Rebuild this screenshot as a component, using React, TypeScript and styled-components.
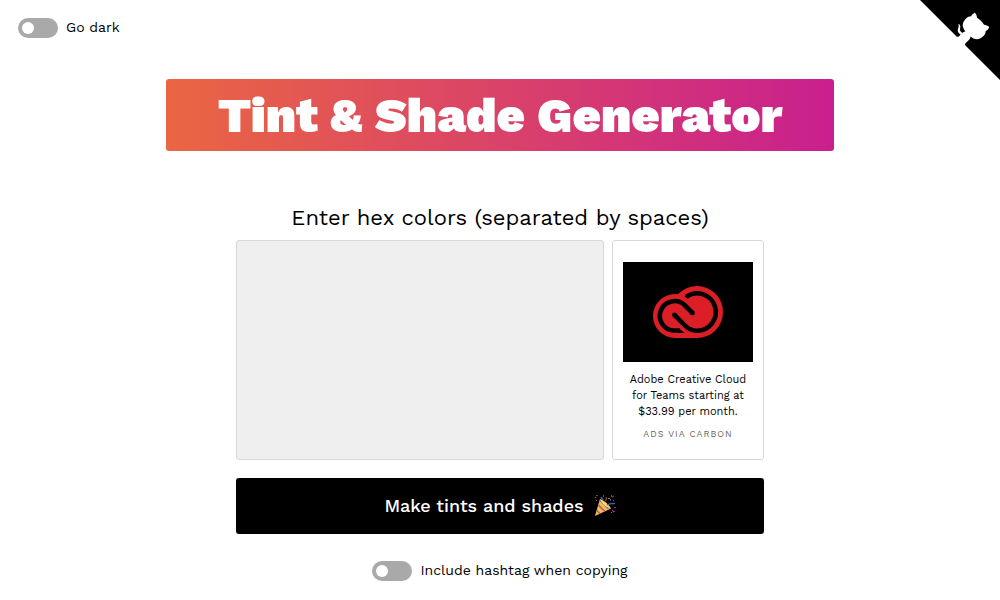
import React from "react";
import styled, { createGlobalStyle } from "styled-components";

const GlobalStyle = createGlobalStyle`
  *, *::before, *::after { box-sizing: border-box; }
  body {
    margin: 0;
    background: #fff;
    color: #000;
    font-family: "Work Sans", Inter, "Liberation Sans", sans-serif;
    font-size: 14px;
  }
`;

const Page = styled.div`
  position: relative;
  padding: 18px 18px 16px;
`;

const Main = styled.main`
  display: flex;
  flex-direction: column;
  align-items: center;
  padding-top: 41px;
`;

const Banner = styled.h1`
  width: 668px;
  max-width: 100%;
  margin: 0 0 53px;
  padding: 6px 12px;
  border-radius: 3px;
  background: linear-gradient(to right, #ea6642, #c91f8f);
  color: #fff;
  font-size: 49px;
  font-weight: 900;
  line-height: 60px;
  text-align: center;
`;

const Form = styled.form`
  display: flex;
  flex-direction: column;
  align-items: center;
  width: 528px;
  max-width: 100%;
`;

const FieldLabel = styled.label`
  margin-bottom: 8px;
  font-size: 22px;
  line-height: 28px;
  text-align: center;
`;

const InputRow = styled.div`
  display: flex;
  gap: 8px;
  width: 100%;
  margin-bottom: 18px;
`;

const ColorInput = styled.textarea`
  flex: 1;
  min-width: 0;
  height: 220px;
  padding: 12px;
  border: 1px solid #d8d8d8;
  border-radius: 3px;
  background: #efefef;
  font: inherit;
  font-size: 20px;
  resize: none;
`;

const AdCard = styled.aside`
  display: flex;
  flex-direction: column;
  width: 152px;
  padding: 21px 10px 0;
  border: 1px solid #d8d8d8;
  border-radius: 3px;
  text-align: center;
`;

const AdLink = styled.a`
  color: #000;
  font-size: 11px;
  line-height: 16px;
  text-decoration: none;
`;

const AdArt = styled.svg`
  display: block;
  width: 130px;
  height: 100px;
  margin-bottom: 10px;
  background: #000;
`;

const AdCredit = styled.a`
  margin-top: 7px;
  color: #666;
  font-size: 9px;
  line-height: 14px;
  letter-spacing: 1px;
  text-decoration: none;
  text-transform: uppercase;
`;

const SubmitButton = styled.button`
  display: flex;
  align-items: center;
  justify-content: center;
  gap: 10px;
  width: 100%;
  height: 56px;
  margin-bottom: 27px;
  padding: 0 0 2px;
  border: 0;
  border-radius: 3px;
  background: #000;
  color: #fff;
  font: inherit;
  font-size: 18px;
  font-weight: 500;
  cursor: pointer;
`;

const ToggleLabel = styled.label`
  display: inline-flex;
  align-items: center;
  gap: 8px;
  line-height: 18px;
  cursor: pointer;
`;

const ToggleText = styled.span`
  padding-bottom: 2px;
`;

const Switch = styled.input`
  appearance: none;
  display: flex;
  align-items: center;
  width: 40px;
  height: 20px;
  margin: 0;
  padding: 0 4px;
  border-radius: 10px;
  background: #a9a9a9;
  cursor: pointer;

  &::before {
    content: "";
    width: 12px;
    height: 12px;
    border-radius: 50%;
    background: #fff;
  }

  &:checked {
    justify-content: flex-end;
    background: #000;
  }
`;

const CornerLink = styled.a`
  position: absolute;
  top: 0;
  right: 0;
  color: #fff;

  svg { display: block; }
`;

function Toggle({ children }: { children: React.ReactNode }) {
  return (
    <ToggleLabel>
      <Switch type="checkbox" role="switch" />
      <ToggleText>{children}</ToggleText>
    </ToggleLabel>
  );
}

function GithubCorner() {
  return (
    <CornerLink href="https://github.com" aria-label="View source on GitHub">
      <svg width="80" height="80" viewBox="0 0 250 250" aria-hidden="true">
        <path fill="#000" d="M0,0 L115,115 L130,115 L142,142 L250,250 L250,0 Z" />
        <path fill="currentColor" d="M128.3,109.0 C113.8,99.7 119.0,89.6 119.0,89.6 C122.0,82.7 120.5,78.6 120.5,78.6 C119.2,72.0 123.4,76.3 123.4,76.3 C127.3,80.9 125.5,87.3 125.5,87.3 C122.9,97.6 130.6,101.9 134.4,103.2" />
        <path fill="currentColor" d="M115.0,115.0 C114.9,115.1 118.7,116.5 119.8,115.4 L133.7,101.6 C136.9,99.2 139.9,98.4 142.2,98.6 C133.8,88.0 127.5,74.4 143.8,58.0 C148.5,53.4 154.0,51.2 159.7,51.0 C160.3,49.4 163.2,43.6 171.4,40.1 C171.4,40.1 176.1,42.5 178.8,56.2 C183.1,58.6 187.2,61.8 190.9,65.4 C194.5,69.0 197.7,73.2 200.1,77.6 C213.8,80.2 216.3,84.9 216.3,84.9 C212.7,93.1 206.9,96.0 205.4,96.6 C205.1,102.4 203.0,107.8 198.3,112.5 C181.9,128.9 168.3,122.5 157.7,114.1 C157.9,116.9 156.7,120.9 152.7,124.9 L141.0,136.5 C139.8,137.7 141.6,141.9 141.8,141.8 Z" />
      </svg>
    </CornerLink>
  );
}

function CreativeCloudArt() {
  return (
    <AdArt viewBox="0 0 130 100" role="img" aria-label="Adobe Creative Cloud">
      <g fill="#dc1f26">
        <circle cx="74" cy="50" r="26" />
        <circle cx="52" cy="54" r="22" />
        <path d="M52 60H74V76H52Z" />
      </g>
      <g fill="none" stroke="#000" strokeWidth="4.6">
        <path d="M63.5 34.6A18.7 18.7 0 1 1 74 68.7Q67 68.7 62 63.5L51.5 53" />
        <path d="M69.5 51L62 43.5A14.7 14.7 0 1 0 52 68.5H57" />
      </g>
      <circle cx="51.5" cy="53" r="2.4" />
      <circle cx="69.5" cy="51" r="2.4" />
      <path d="M61.5 34.3L66 31V36L64.5 36.8Z" />
      <path d="M56 66.2L61.5 71H55Z" />
    </AdArt>
  );
}

function PartyPopper() {
  return (
    <svg width="22" height="22" viewBox="0 0 22 22" aria-hidden="true">
      <path fill="#f3bf4a" d="M1 22L6 5Q12 8 17 14.5Z" />
      <path fill="#a8628c" d="M4.6 10L11.6 17L10 17.8L4.1 12ZM6 5L7.6 6.4L15.6 15.2L14.2 15.8L5.5 7ZM3 15.4L6.9 19.3L5.4 20L2.5 17.2Z" />
      <path fill="#ffd968" d="M6 5Q13 8 17 14.5Q13 13.5 10 11Q7 8 6 5Z" />
      <path fill="none" stroke="#2f6a9f" strokeWidth="1.5" d="M13 11Q16 9 21 9.5M7 3L9 6" />
      <path fill="none" stroke="#9c3d36" strokeWidth="1.2" d="M11 7Q13 6 12 3M18 3L20 2M18 16L20 18M1 3L2 4" />
      <path fill="#40579b" d="M2 1H4V2H2ZM16 5H17V7H16ZM20 13H22V14H20Z" />
      <path fill="#a67c2c" d="M14 4H16V5H14ZM19 6H20V7H19ZM17 18H18V19H17ZM2 6H3V7H2Z" />
      <path fill="#8d3d50" d="M9 1H10V3H9ZM20 17H21V18H20ZM17 1H18V3H17Z" />
    </svg>
  );
}

export default function App() {
  return (
    <Page>
      <GlobalStyle />
      <Toggle>Go dark</Toggle>
      <GithubCorner />
      <Main>
        <Banner>Tint &amp; Shade Generator</Banner>
        <Form onSubmit={(event: React.FormEvent) => event.preventDefault()}>
          <FieldLabel htmlFor="colors">Enter hex colors (separated by spaces)</FieldLabel>
          <InputRow>
            <ColorInput id="colors" />
            <AdCard>
              <AdLink href="https://www.adobe.com">
                <CreativeCloudArt />
                Adobe Creative Cloud for Teams starting at $33.99 per month.
              </AdLink>
              <AdCredit href="https://www.carbonads.net">Ads via Carbon</AdCredit>
            </AdCard>
          </InputRow>
          <SubmitButton type="submit">
            Make tints and shades
            <PartyPopper />
          </SubmitButton>
          <Toggle>Include hashtag when copying</Toggle>
        </Form>
      </Main>
    </Page>
  );
}
